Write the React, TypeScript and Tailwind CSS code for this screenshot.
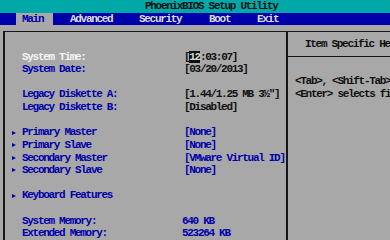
export default function App() {
  const rows = [
    { label: "System Time:", value: "time", labelColor: "text-[#f4f4f4]" },
    { label: "System Date:", value: "[03/20/2013]", labelColor: "text-[#0000aa]", valueColor: "text-[#101010]" },
    null,
    { label: "Legacy Diskette A:", value: "[1.44/1.25 MB  3½\"]", labelColor: "text-[#0000aa]", valueColor: "text-[#101010]" },
    { label: "Legacy Diskette B:", value: "[Disabled]", labelColor: "text-[#0000aa]", valueColor: "text-[#101010]" },
    null,
    { label: "Primary Master", value: "[None]", arrow: true, labelColor: "text-[#0000aa]", valueColor: "text-[#0000aa]" },
    { label: "Primary Slave", value: "[None]", arrow: true, labelColor: "text-[#0000aa]", valueColor: "text-[#0000aa]" },
    { label: "Secondary Master", value: "[VMware Virtual ID]", arrow: true, labelColor: "text-[#0000aa]", valueColor: "text-[#0000aa]" },
    { label: "Secondary Slave", value: "[None]", arrow: true, labelColor: "text-[#0000aa]", valueColor: "text-[#0000aa]" },
    null,
    { label: "Keyboard Features", value: "", arrow: true, labelColor: "text-[#0000aa]" },
    null,
    { label: "System Memory:", value: "640 KB", labelColor: "text-[#0000aa]", valueColor: "text-[#0000aa] -ml-[2px]" },
    { label: "Extended Memory:", value: "523264 KB", labelColor: "text-[#0000aa]", valueColor: "text-[#0000aa] -ml-[2px]" },
  ];

  return (
    <div className="w-[390px] h-[240px] overflow-hidden bg-[#a8a8a8] flex flex-col text-[11px] font-bold tracking-[-1.3px] font-['Liberation_Mono',monospace] whitespace-nowrap">
      {/* title */}
      <div className="h-[12.64px] shrink-0 bg-[#00a8a8] pl-[145px] leading-[12.64px] text-[#101010]">
        PhoenixBIOS Setup Utility
      </div>

      {/* menu tabs */}
      <div className="h-[12.64px] shrink-0 bg-[#0000aa] flex leading-[12.64px] text-[#dcdcdc]">
        <div className="w-[16px]" />
        <div className="w-[37px] pl-[6px] bg-[#a8a8a8] text-[#0000aa]">Main</div>
        <div className="w-[86px] pl-[17px]">Advanced</div>
        <div className="w-[70px]">Security</div>
        <div className="w-[48px]">Boot</div>
        <div>Exit</div>
      </div>

      {/* body */}
      <div className="flex-1 mt-[6px] ml-[3px] flex border-l-2 border-t border-[#161616]">
        <div className="w-[281px] pt-[18.3px] flex flex-col">
          {rows.map((r, i) =>
            r ? (
              <div key={i} className="h-[12.64px] leading-[12.64px] flex">
                <div className="w-[17px] pl-[7px] flex items-center">
                  {r.arrow && (
                    <span className="w-0 h-0 border-y-[2.5px] border-y-transparent border-l-[4px] border-l-[#0000aa]" />
                  )}
                </div>
                <div className={`w-[162px] ${r.labelColor}`}>{r.label}</div>
                {r.value === "time" ? (
                  <div className="text-[#101010] flex">
                    <span>[</span>
                    <span className="bg-[#101010] text-[#d8d8d8]">12</span>
                    <span>:03:07]</span>
                  </div>
                ) : (
                  <div className={r.valueColor}>{r.value}</div>
                )}
              </div>
            ) : (
              <div key={i} className="h-[12.64px]" />
            )
          )}
        </div>

        {/* help panel */}
        <div className="flex-1 border-l-2 border-[#161616] flex flex-col overflow-hidden text-[#101010]">
          <div className="h-[24.6px] border-b border-[#161616] pt-[5.4px] pl-[17px] leading-[12.64px]">
            Item Specific Help
          </div>
          <div className="pt-[18.4px] pl-[7px] leading-[12.64px]">
            <div className="h-[12.64px]">&lt;Tab&gt;, &lt;Shift-Tab&gt;, or</div>
            <div className="h-[12.64px]">&lt;Enter&gt; selects field.</div>
          </div>
        </div>
      </div>
    </div>
  );
}
